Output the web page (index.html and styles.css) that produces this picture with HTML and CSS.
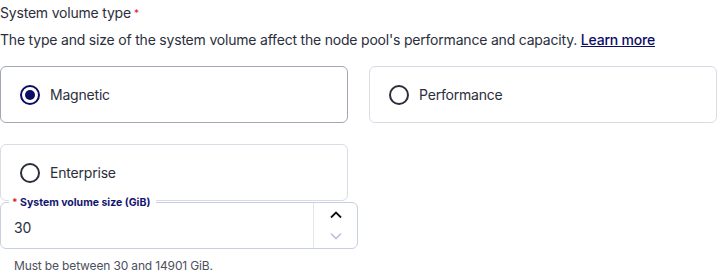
FILE: index.html
```html
<!DOCTYPE html>
<html lang="en">
<head>
  <meta charset="UTF-8" />
  <title>System volume</title>
  <link rel="stylesheet" href="styles.css">
</head>
<body>
  <div class="secao">
    <div class="titulo">System volume type<span class="req">*</span></div>
    <p class="descricao">The type and size of the system volume affect the node pool's performance and capacity. <a href="#">Learn more</a></p>

    <div class="opcoes">
      <label class="opcao selecionada"><span class="radio"></span>Magnetic</label>
      <label class="opcao"><span class="radio"></span>Performance</label>
      <label class="opcao"><span class="radio"></span>Enterprise</label>
    </div>

    <div class="campo-numero">
      <span class="rotulo"><span class="req">*</span> System volume size (GiB)</span>
      <div class="valor">30</div>
      <div class="setas">
        <svg class="seta-cima" width="14" height="9" viewBox="0 0 14 9"><path d="M2 7.5 L7 2.5 L12 7.5" fill="none" stroke="#111" stroke-width="1.8"/></svg>
        <svg class="seta-baixo" width="14" height="9" viewBox="0 0 14 9"><path d="M2 1.5 L7 6.5 L12 1.5" fill="none" stroke="#b9c2dc" stroke-width="1.6"/></svg>
      </div>
    </div>
    <div class="ajuda">Must be between 30 and 14901 GiB.</div>
  </div>
</body>
</html>
```

FILE: styles.css
```css
body {
  font-family: Inter, "Noto Sans", sans-serif;
  background-color: #fff;
  color: #2b2e3c;
  margin: 0;
  padding: 0;
  letter-spacing: -0.2px;
}

.secao {
  padding-top: 3px;
}

.titulo {
  font-size: 14px;
  line-height: 20px;
}

.req {
  color: #e0202a;
  font-size: 10px;
  vertical-align: top;
  margin-left: 3px;
}

.descricao {
  font-size: 14px;
  line-height: 20px;
  margin: 7px 0 0;
}

.descricao a {
  color: #0c0c66;
  font-weight: 500;
  text-decoration: underline;
}

.opcoes {
  display: grid;
  grid-template-columns: 348px 348px;
  column-gap: 21px;
  row-gap: 21px;
  margin-top: 16px;
}

.opcao {
  display: flex;
  align-items: center;
  height: 57px;
  box-sizing: border-box;
  border: 1px solid #d9dce4;
  border-radius: 6px;
  padding-left: 19px;
  font-size: 14px;
}

.opcao.selecionada {
  border-color: #a2a7b6;
}

.radio {
  width: 20px;
  height: 20px;
  box-sizing: border-box;
  border: 2px solid #2b2e3c;
  border-radius: 50%;
  margin-right: 10px;
  position: relative;
}

.selecionada .radio {
  border-color: #0c0c66;
}

.selecionada .radio::after {
  content: "";
  position: absolute;
  left: 3px;
  top: 3px;
  width: 10px;
  height: 10px;
  border-radius: 50%;
  background-color: #0c0c66;
}

.campo-numero {
  position: relative;
  display: flex;
  width: 358px;
  height: 47px;
  box-sizing: border-box;
  margin-top: 1px;
  border: 1px solid #c9cfe2;
  border-radius: 6px;
}

.rotulo {
  position: absolute;
  left: 8px;
  top: -8px;
  padding: 0 6px 0 3px;
  background-color: #fff;
  color: #14146e;
  font-size: 10.5px;
  font-weight: 700;
  line-height: 14px;
  letter-spacing: 0;
}

.rotulo .req {
  margin-left: 0;
  vertical-align: baseline;
}

.valor {
  flex: 1;
  padding-left: 13px;
  padding-top: 4px;
  display: flex;
  align-items: center;
  font-size: 14px;
}

.setas {
  width: 43px;
  border-left: 1px solid #e3e6ef;
  display: flex;
  flex-direction: column;
  align-items: center;
  justify-content: center;
  gap: 13px;
}

.ajuda {
  font-size: 12px;
  color: #4d505d;
  margin-top: 9px;
  padding-left: 14px;
  letter-spacing: -0.15px;
}
```
